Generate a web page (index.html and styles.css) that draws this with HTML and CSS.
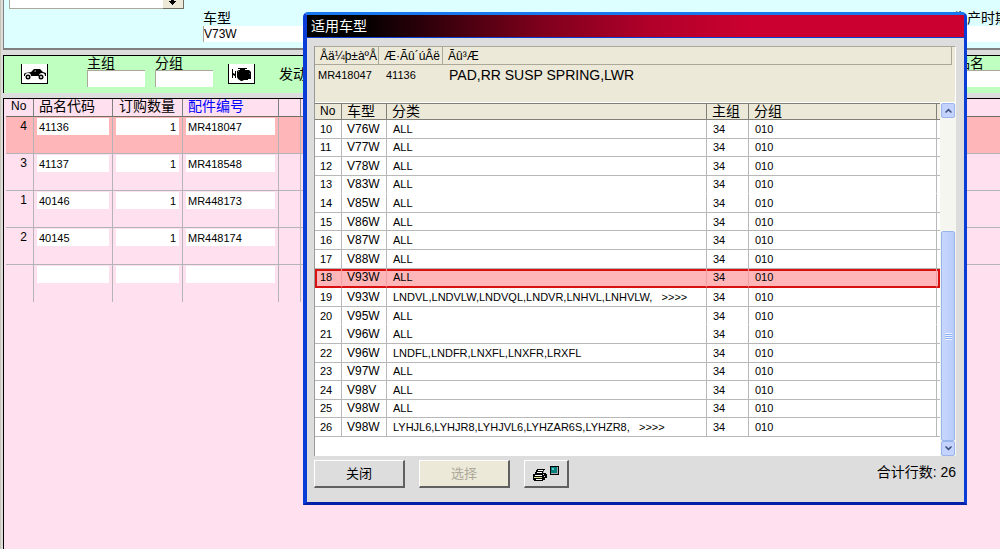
FILE: index.html
```html
<!DOCTYPE html>
<html lang="zh-CN">
<head>
<meta charset="utf-8">
<title>适用车型</title>
<link rel="stylesheet" href="styles.css">
</head>
<body>
<main class="app">
  <section class="vehicle">
    <div class="picker"><span class="picker-value"></span><button class="drop" aria-label="展开"><svg width="10" height="6" viewBox="0 0 10 6"><path d="M3 0h3v1h2v1H7v1H6v1H5v1H4V4H3V3H2V2H1V1h2z"/></svg></button></div>
    <div class="model">
      <label for="model">车型</label>
      <input id="model" value="V73W">
    </div>
    <label class="period" for="model">生产时期</label>
  </section>
  <section class="groups">
    <button class="tool" aria-label="车辆"><svg width="24" height="14" viewBox="0 0 24 14"><path d="M1 7l1-1 6-1 3-3h6l3 3 3 1v3h-1a3 3 0 0 0-6 0H8a3 3 0 0 0-6 0L1 9z"/><circle cx="5" cy="10" r="2.500"/><circle cx="18" cy="10" r="2.500"/><path d="M4 9h2v2H4zM17 9h2v2h-2z" fill="#bbb"/><path d="M12 3h1v2h-2z" fill="#666"/></svg></button>
    <div class="field"><label for="mg">主组</label><input id="mg"></div>
    <div class="field"><label for="sg">分组</label><input id="sg"></div>
    <button class="tool" aria-label="发动机"><svg width="20" height="14" viewBox="0 0 20 14"><path d="M6 1h9v1h-2v1h4l2 2v7h-3v1h-4l-2 1H9l-3-2-1-2V4l2-1h1V2H6zM0 2h1v4l2 1V4h1v7H3V9L1 8v3H0z"/><path d="M6 4h1v1H6zM17 6h1v1h-1z" fill="#666"/></svg></button>
    <span class="engine">发动机</span>
    <div class="field name"><label for="nm">品名</label><input id="nm"></div>
  </section>
  <section class="order">
    <table class="parts">
      <colgroup><col class="p-no"><col class="p-code"><col class="p-qty"><col class="p-part"><col class="p-gap"><col></colgroup>
      <thead><tr><th class="latin">No</th><th>品名代码</th><th class="right">订购数量</th><th class="blue">配件编号</th><th></th><th></th></tr></thead>
      <tbody>
        <tr class="current"><td>4</td><td><input aria-label="品名代码" value="41136"></td><td><input aria-label="订购数量" class="num" value="1"></td><td><input aria-label="配件编号" value="MR418047"></td><td></td><td></td></tr>
        <tr><td>3</td><td><input aria-label="品名代码" value="41137"></td><td><input aria-label="订购数量" class="num" value="1"></td><td><input aria-label="配件编号" value="MR418548"></td><td></td><td></td></tr>
        <tr><td>1</td><td><input aria-label="品名代码" value="40146"></td><td><input aria-label="订购数量" class="num" value="1"></td><td><input aria-label="配件编号" value="MR448173"></td><td></td><td></td></tr>
        <tr><td>2</td><td><input aria-label="品名代码" value="40145"></td><td><input aria-label="订购数量" class="num" value="1"></td><td><input aria-label="配件编号" value="MR448174"></td><td></td><td></td></tr>
        <tr class="blank"><td></td><td><input aria-label="品名代码"></td><td><input aria-label="订购数量"></td><td><input aria-label="配件编号"></td><td></td><td></td></tr>
      </tbody>
    </table>
  </section>
</main>

<div class="dialog" role="dialog" aria-labelledby="dlg-title">
  <h1 class="title" id="dlg-title">适用车型</h1>
  <div class="content">
    <div class="lists">
      <table class="info">
        <colgroup><col class="i-part"><col class="i-code"><col></colgroup>
        <thead><tr><th>Åä¼þ±àºÅ</th><th>Æ·Ãû´úÂë</th><th>Ãû³Æ</th></tr></thead>
        <tbody><tr><td>MR418047</td><td>41136</td><td class="desc">PAD,RR SUSP SPRING,LWR</td></tr></tbody>
      </table>
      <div class="scroller">
        <table class="models">
          <colgroup><col class="m-no"><col class="m-model"><col><col class="m-main"><col class="m-sub"><col class="m-end"></colgroup>
          <thead><tr><th class="latin">No</th><th>车型</th><th>分类</th><th>主组</th><th>分组</th><th></th></tr></thead>
          <tbody>
            <tr><td>10</td><td>V76W</td><td>ALL</td><td>34</td><td>010</td><td></td></tr>
            <tr><td>11</td><td>V77W</td><td>ALL</td><td>34</td><td>010</td><td></td></tr>
            <tr><td>12</td><td>V78W</td><td>ALL</td><td>34</td><td>010</td><td></td></tr>
            <tr class="open"><td>13</td><td>V83W</td><td>ALL</td><td>34</td><td>010</td><td></td></tr>
            <tr><td>14</td><td>V85W</td><td>ALL</td><td>34</td><td>010</td><td></td></tr>
            <tr><td>15</td><td>V86W</td><td>ALL</td><td>34</td><td>010</td><td></td></tr>
            <tr><td>16</td><td>V87W</td><td>ALL</td><td>34</td><td>010</td><td></td></tr>
            <tr><td>17</td><td>V88W</td><td>ALL</td><td>34</td><td>010</td><td></td></tr>
            <tr class="picked"><td>18</td><td>V93W</td><td>ALL</td><td>34</td><td>010</td><td></td></tr>
            <tr><td>19</td><td>V93W</td><td>LNDVL,LNDVLW,LNDVQL,LNDVR,LNHVL,LNHVLW,&nbsp;&nbsp; &gt;&gt;&gt;&gt;</td><td>34</td><td>010</td><td></td></tr>
            <tr class="open"><td>20</td><td>V95W</td><td>ALL</td><td>34</td><td>010</td><td></td></tr>
            <tr><td>21</td><td>V96W</td><td>ALL</td><td>34</td><td>010</td><td></td></tr>
            <tr><td>22</td><td>V96W</td><td>LNDFL,LNDFR,LNXFL,LNXFR,LRXFL</td><td>34</td><td>010</td><td></td></tr>
            <tr><td>23</td><td>V97W</td><td>ALL</td><td>34</td><td>010</td><td></td></tr>
            <tr><td>24</td><td>V98V</td><td>ALL</td><td>34</td><td>010</td><td></td></tr>
            <tr><td>25</td><td>V98W</td><td>ALL</td><td>34</td><td>010</td><td></td></tr>
            <tr><td>26</td><td>V98W</td><td>LYHJL6,LYHJR8,LYHJVL6,LYHZAR6S,LYHZR8,&nbsp;&nbsp; &gt;&gt;&gt;&gt;</td><td>34</td><td>010</td><td></td></tr>
          </tbody>
        </table>
        <div class="bar">
          <button class="arrow" aria-label="向上"><svg width="7" height="5" viewBox="0 0 7 5"><path d="M0 4l3.500-3.500L7 4 6 5 3.500 2.700 1 5z"/></svg></button>
          <div class="track"><div class="thumb"><span class="grip"></span></div></div>
          <button class="arrow" aria-label="向下"><svg width="7" height="5" viewBox="0 0 7 5"><path d="M0 1l3.500 3.500L7 1 6 0 3.500 2.300 1 0z"/></svg></button>
        </div>
      </div>
    </div>
    <footer class="actions">
      <button class="action wide">关闭</button>
      <button class="action wide off" disabled>选择</button>
      <button class="action print" aria-label="打印预览"><svg width="28" height="16" viewBox="0 0 28 16"><path d="M5 3h8v1h-1l-1 3h3v1h1v4h-2v2h-2v1H2v-1H1V8h2V6h1V4h1z"/><path d="M6 4h5v1H6zM5 6h5v1H5zM3 9h7v1H3zM4 13h6v1H4z" fill="#fff"/><path d="M2 11h8v1H2z" fill="#e4e48c"/><path d="M11 8h1v1h-1zM12 10h1v1h-1z" fill="#ddd"/><path d="M18 0h9v9h-9z"/><path d="M19 1h7v7h-7z" fill="#aaa"/><path d="M19 1h6v6h-6z" fill="#078080"/><path d="M20 2h2v2h-2z" fill="#6cc"/></svg></button>
      <span class="total">合计行数: 26</span>
    </footer>
  </div>
</div>
</body>
</html>
```

FILE: styles.css
```css
* { box-sizing: border-box; }

body {
  margin: 0;
  height: 100vh;
  overflow: hidden;
  background: #ddd;
  color: #000;
  font: 11px/14px "Liberation Sans", "Noto Sans CJK SC", sans-serif;
}

input, button { font: inherit; color: inherit; border-radius: 0; margin: 0; }
input { border: 0; background: #fff; outline: 0; min-width: 0; }
button { padding: 0; display: flex; align-items: center; justify-content: center; }
svg { flex: none; }
table { border-collapse: separate; border-spacing: 0; table-layout: fixed; width: 100%; }
th { font-weight: normal; text-align: left; white-space: nowrap; padding: 0; }
td { padding: 0; white-space: nowrap; }
label, .engine, .total { font-size: 14px; line-height: 16px; white-space: nowrap; }

/* Main window */
.app {
  height: 100%;
  display: flex;
  flex-direction: column;
  gap: 5px;
  padding-left: 2px;
  border-left: 1px solid #c8c5b5;
}
.vehicle {
  flex: none;
  display: flex;
  height: 50px;
  background: #dff;
  border-left: 1px solid #808080;
  border-bottom: 2px solid #808080;
}
.picker { display: flex; width: 175px; height: 9px; margin-left: 5px; }
.picker-value { flex: 1; background: #fff; border: solid #aca899; border-width: 0 0 1px 1px; }
.drop { width: 21px; background: #ece9d8; border: solid #716f64; border-width: 0 1px 1px 0; align-items: flex-start; }
.model { flex: 1; display: flex; flex-direction: column; padding: 10px 0 0 19px; }
.model input { height: 16px; padding: 0; border-left: 1px solid #aca899; font-size: 12px; }
.model label { align-self: flex-start; }
.period { width: 47px; margin-left: -47px; padding-top: 10px; overflow: hidden; }

.groups {
  flex: none;
  display: flex;
  height: 38px;
  background: #bfffbf;
  border-top: 1px solid #000;
  border-left: 1px solid #000;
}
.tool { width: 27px; height: 20px; margin: 8px 0 0 17px; background: #fff; border: solid #000; border-width: 0 1px 1px 1px; }
.field { display: flex; flex-direction: column; width: 58px; margin-left: 10px; }
.field label { line-height: 14px; }
.field input { width: 100%; height: 17px; border: solid #aca899; border-width: 1px 0 0 1px; }
.tool + .field { margin-left: 39px; }
.field + .tool { margin-left: 15px; }
.engine { padding: 10px 0 0 24px; }
.name { flex: 1; }
.name label { align-self: flex-end; margin-right: 16px; }

.order { flex: 1; background: #ffe0ee; border-top: 1px solid #000; border-left: 1px solid #000; padding-left: 2px; }
.p-no { width: 28px; }
.p-code { width: 79px; }
.p-qty { width: 70px; }
.p-part { width: 96px; }
.p-gap { width: 22px; }
.parts th { height: 18px; padding-left: 5px; font-size: 14px; line-height: 14px; border-right: 1px solid #808080; border-bottom: 1px solid #716f64; vertical-align: top; }
.parts th.latin, .models th.latin { font-size: 12px; }
.parts th.right { text-align: right; padding-right: 7px; }
.parts th.blue { color: #00f; }
.parts td { height: 37px; vertical-align: top; padding: 1px 3px 0; border-right: 1px solid #b4b4b8; border-bottom: 1px solid #b4b4b8; }
.parts td:first-child { text-align: right; padding: 2px 6px 0 0; font-size: 12px; }
.parts th:last-child, .parts td:last-child { border-right: 0; }
.parts .blank td { border-bottom: 0; }
.parts .current td { background: #ffb6b8; }
.parts td input { display: block; width: 100%; height: 17px; padding: 0 2px; }
.parts td .num { text-align: right; padding-right: 3px; }

/* Dialog */
.dialog {
  position: absolute;
  inset: 12px 33px 44px 303px;
  display: flex;
  flex-direction: column;
  background: #ddd;
  border: solid #0a3cd8;
  border-width: 3px 3px 3px 4px;
  border-top-color: #1878f0;
  border-bottom-color: #0020a8;
  border-radius: 5px 5px 0 0;
}
.title {
  flex: none;
  height: 23px;
  margin: 0;
  padding-left: 4px;
  font-size: 14px;
  font-weight: normal;
  line-height: 23px;
  color: #fff;
  background: linear-gradient(90deg, #000 0, #000 8%, #80001c 36%, #b0002a 52%, #cc0030 68%);
  border-bottom: 1px solid #0a3cd0;
}
.content { flex: 1; display: flex; flex-direction: column; padding: 8px 8px 0 7px; }
.lists { display: flex; flex-direction: column; border-left: 1px solid #999; }
.info { background: #ece9d8; border-top: 1px solid #aca899; border-right: 1px solid #fff; padding-right: 3px; }
.i-part { width: 64px; }
.i-code { width: 64px; }
.info th { height: 18px; padding-left: 5px; font-size: 12px; border: solid #aca899; border-width: 0 1px 1px 0; }
.info td { height: 37px; padding: 3px 0 0 3px; vertical-align: top; }
.info td.desc { font-size: 14px; padding-left: 6px; }
.info td:nth-child(2) { padding-left: 7px; }

.scroller { display: flex; height: 354px; background: #fff; border-top: 1px solid #fff; }
.models { flex: 1; width: auto; min-width: 0; height: 334px; }
.m-no { width: 27px; }
.m-model { width: 45px; }
.m-main { width: 42px; }
.m-sub { width: 188px; }
.m-end { width: 3px; }
.models th { height: 17px; padding-left: 5px; font-size: 14px; line-height: 15px; background: #ece9d8; border: solid #808078; border-width: 1px 1px 1px 0; }
.models td { padding-left: 6px; line-height: 14px; border-right: 1px solid #b8b8b8; border-bottom: 1px solid #b8b8b8; }
.models td:first-child, .models td:nth-child(2) { padding-left: 5px; }
.models td:nth-child(2) { font-size: 12px; }
.models td:last-child, .models th:last-child { border-right: 0; padding: 0; }
.models .open td { border-bottom-color: #fff; }
.models .picked td { background: #ffb6b8; border-bottom: 2px solid #d81010; border-right-color: #f0a0a0; box-shadow: inset 0 2px #d81010; }
.models .picked td:first-child { box-shadow: inset 2px 2px #d81010; }
.models .picked td:last-child { border-right: 2px solid #d81010; }

.bar { flex: none; width: 16px; display: flex; flex-direction: column; background: #f6f6f0; }
.arrow { flex: none; height: 15px; margin: 0 1px; background: #c3d3fd; border: 1px solid #9ab4ee; border-radius: 2px; fill: #3c4f7c; }
.track { flex: 1; display: flex; flex-direction: column; justify-content: flex-end; }
.thumb { height: 65%; margin: 0 1px; display: flex; align-items: center; justify-content: center; background: linear-gradient(90deg, #c8d6fc, #b8ccfa); border: 1px solid #98b4e8; border-radius: 2px; }
.grip { width: 7px; height: 7px; background: repeating-linear-gradient(#eef4ff 0 1px, #8cb0f8 1px 2px); }

.actions { display: flex; gap: 14px; padding-top: 4px; }
.action { height: 28px; background: #ddd; border: 1px solid #fff; border-right: 2px solid #606060; border-bottom: 2px solid #606060; }
.wide { width: 91px; font-size: 13px; }
.off { color: #aca899; background: #ece9d8; }
.print { width: 45px; }
.total { margin-left: auto; padding-top: 4px; }
```
